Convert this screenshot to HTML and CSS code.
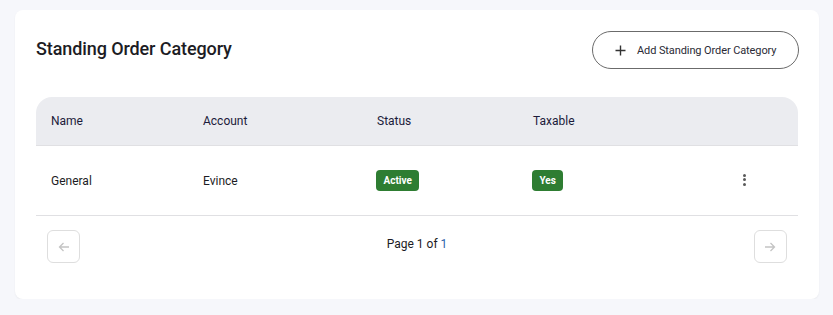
FILE: index.html
```html
<!DOCTYPE html>
<html>
<head>
<meta charset="utf-8">
<link rel="stylesheet" href="styles.css">
</head>
<body>
<div class="card">
  <div class="card-head">
    <h1 class="title">Standing Order Category</h1>
    <button class="add-btn">
      <svg class="plus" width="11" height="11" viewBox="0 0 11 11"><path d="M5.5 0.5v10M0.5 5.5h10" stroke="#333" stroke-width="1.4" fill="none"/></svg>
      <span>Add Standing Order Category</span>
    </button>
  </div>
  <div class="table">
    <div class="row head">
      <div class="cell">Name</div>
      <div class="cell">Account</div>
      <div class="cell">Status</div>
      <div class="cell">Taxable</div>
      <div class="cell"></div>
    </div>
    <div class="row body">
      <div class="cell">General</div>
      <div class="cell">Evince</div>
      <div class="cell"><span class="badge">Active</span></div>
      <div class="cell"><span class="badge">Yes</span></div>
      <div class="cell action"><span class="dots"><i></i><i></i><i></i></span></div>
    </div>
    <div class="pager">
      <button class="pg-btn">
        <svg width="12" height="12" viewBox="0 0 12 12"><path d="M11 6H1.5M5.5 2L1.5 6l4 4" stroke="#c4c4c4" stroke-width="1.3" fill="none"/></svg>
      </button>
      <div class="pg-text">Page 1 of <span class="pg-num">1</span></div>
      <button class="pg-btn">
        <svg width="12" height="12" viewBox="0 0 12 12"><path d="M1 6h9.5M6.5 2l4 4-4 4" stroke="#c4c4c4" stroke-width="1.3" fill="none"/></svg>
      </button>
    </div>
  </div>
</div>
</body>
</html>
```
FILE: styles.css
```css
* { box-sizing: border-box; }
body {
  margin: 0;
  padding: 10px 14px 0 15px;
  background: #f6f7fb;
  font-family: Roboto, "Liberation Sans", sans-serif;
  color: #1f1f2e;
}
.card {
  background: #fff;
  border-radius: 8px;
  box-shadow: 0 1px 2px rgba(0,0,0,0.05);
  padding: 21px 21px 21px 21px;
  height: 289px;
}
.card-head {
  display: flex;
  align-items: center;
  justify-content: space-between;
  height: 38px;
}
.title {
  margin: 0;
  font-size: 18px;
  font-weight: 500;
  letter-spacing: -0.1px;
  color: #1c1c24;
  margin-top: -3px;
}
.add-btn {
  height: 38px;
  width: 207px;
  margin-right: -1px;
  border: 1px solid #6b6b6b;
  border-radius: 19px;
  background: #fff;
  display: flex;
  align-items: center;
  padding: 0 0 0 22px;
  gap: 11px;
  font-family: Roboto, "Liberation Sans", sans-serif;
  font-size: 11px;
  letter-spacing: -0.1px;
  color: #2a2a35;
}
.plus { flex: none; }
.table {
  margin-top: 28px;
}
.row {
  display: grid;
  grid-template-columns: 152px 174px 156px 209px 1fr;
  align-items: center;
  border-bottom: 1px solid #e0e0e3;
}
.row.head {
  height: 49px;
  background: #ebecf0;
  border-radius: 16px 16px 0 0;
  font-size: 12px;
  color: #1b1b3a;
}
.row.body {
  height: 70px;
  font-size: 12px;
  color: #1c1c24;
}
.cell {
  padding-left: 15px;
}
.action {
  display: flex;
  align-items: center;
}
.badge {
  display: inline-flex;
  align-items: center;
  height: 21px;
  padding: 0 7.5px;
  border-radius: 4px;
  background: #2e7d32;
  color: #fff;
  font-size: 10px;
  font-weight: 700;
  margin-left: -1px;
}
.dots {
  display: flex;
  flex-direction: column;
  gap: 1.5px;
  margin-left: 0.5px;
  margin-top: -2px;
}
.dots i {
  display: block;
  width: 3px;
  height: 3px;
  border-radius: 50%;
  background: #5a5a5a;
}
.pager {
  display: flex;
  align-items: center;
  justify-content: space-between;
  padding: 14px 11px 0 11px;
}
.pg-btn {
  width: 33px;
  height: 33px;
  border: 1px solid #dedede;
  border-radius: 6px;
  background: #fff;
  display: flex;
  align-items: center;
  justify-content: center;
  padding: 0;
}
.pg-text {
  font-size: 12px;
  color: #1c1c24;
  margin-top: -6px;
}
.pg-num { color: #2b63a8; }
```
